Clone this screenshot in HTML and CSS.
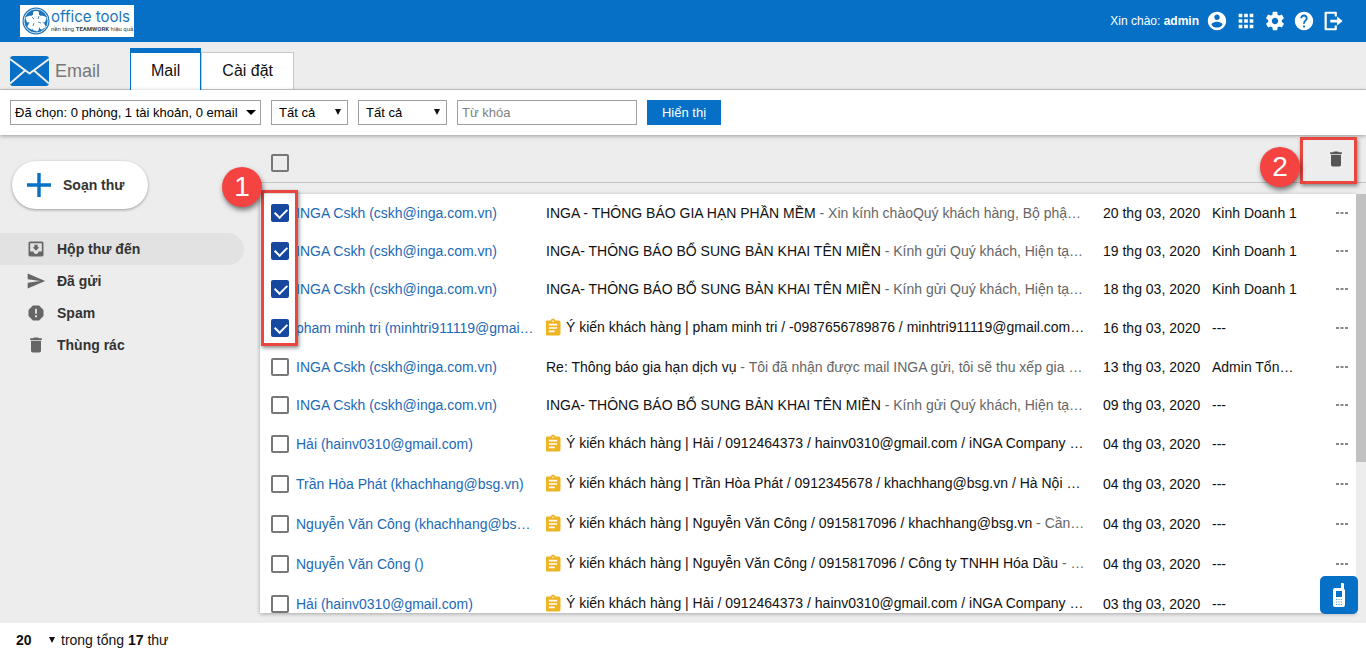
FILE: index.html
```html
<!DOCTYPE html>
<html lang="vi">
<head>
<meta charset="utf-8">
<title>Email</title>
<link rel="stylesheet" href="styles.css">
</head>
<body>
<svg class="sprite" aria-hidden="true">
  <symbol id="i-task" viewBox="0 0 24 24"><path d="M19 3h-4.200C14.400 1.800 13.300 1 12 1s-2.400.8-2.800 2H5c-1.100 0-2 .9-2 2v14c0 1.100.9 2 2 2h14c1.100 0 2-.9 2-2V5c0-1.100-.9-2-2-2zm-7 0c.55 0 1 .45 1 1s-.45 1-1 1-1-.45-1-1 .45-1 1-1zm2 14H7v-2h7v2zm3-4H7v-2h10v2zm0-4H7V7h10v2z"/></symbol>
  <symbol id="i-trash" viewBox="0 0 24 24"><path d="M6 19c0 1.100.9 2 2 2h8c1.100 0 2-.9 2-2V7H6v12zM19 4h-3.500l-1-1h-5l-1 1H5v2h14V4z"/></symbol>
  <symbol id="i-more" viewBox="0 0 12 4"><path d="M0 1h3v2H0zM4.500 1h3v2h-3zM9 1h3v2H9z"/></symbol>
</svg>
<header class="topbar">
  <a class="logo" href="#">
    <svg class="logo-mark" viewBox="0 0 28 28"><circle cx="14" cy="14" r="13.500" fill="#1b75bb"/><circle cx="14" cy="14" r="12" fill="none" stroke="#fff" stroke-width=".8"/><g fill="#fff"><circle cx="14" cy="14" r="7"/><rect x="11" y="4" width="6" height="6" rx="1.500"/><rect x="11" y="18" width="6" height="6" rx="1.500" transform="rotate(12 14 21)"/><rect x="4" y="9" width="6" height="6" rx="1.500" transform="rotate(-20 7 12)"/><rect x="18" y="9" width="6" height="6" rx="1.500" transform="rotate(20 21 12)"/><rect x="6" y="16" width="6" height="6" rx="1.500" transform="rotate(30 9 19)"/><rect x="17" y="16" width="6" height="6" rx="1.500" transform="rotate(-30 20 19)"/></g><path d="M10 10l2 2m5-3l-1 3m3 4l-3-1m-5 4l1-3" fill="none" stroke="#1b75bb" stroke-width=".8"/></svg>
    <span class="logo-text"><span class="logo-name">office tools</span><span class="logo-tag">nền tảng <b>TEAMWORK</b> hiệu quả</span></span>
  </a>
  <div class="account">
    <span class="hello">Xin chào: <b>admin</b></span>
    <a href="#" aria-label="Tài khoản"><svg viewBox="0 0 24 24"><path d="M12 2C6.480 2 2 6.480 2 12s4.480 10 10 10 10-4.480 10-10S17.520 2 12 2zm0 3c1.660 0 3 1.340 3 3s-1.340 3-3 3-3-1.340-3-3 1.340-3 3-3zm0 14.200c-2.500 0-4.710-1.280-6-3.220.03-1.990 4-3.080 6-3.080 1.990 0 5.970 1.090 6 3.080-1.290 1.940-3.500 3.220-6 3.220z"/></svg></a>
    <a href="#" aria-label="Ứng dụng"><svg viewBox="0 0 24 24"><path d="M4 8h4V4H4v4zm6 12h4v-4h-4v4zm-6 0h4v-4H4v4zm0-6h4v-4H4v4zm6 0h4v-4h-4v4zm6-10v4h4V4h-4zm-6 4h4V4h-4v4zm6 6h4v-4h-4v4zm0 6h4v-4h-4v4z"/></svg></a>
    <a href="#" aria-label="Cài đặt"><svg viewBox="0 0 24 24"><path d="M19.430 12.980c.04-.32.07-.64.07-.98s-.03-.66-.07-.98l2.110-1.650c.19-.15.24-.42.12-.64l-2-3.460c-.12-.22-.39-.3-.61-.22l-2.490 1c-.52-.4-1.080-.73-1.690-.98l-.38-2.650C14.460 2.180 14.250 2 14 2h-4c-.25 0-.46.18-.49.42l-.38 2.650c-.61.25-1.170.59-1.690.98l-2.490-1c-.23-.09-.49 0-.61.22l-2 3.460c-.13.22-.07.49.12.64l2.110 1.650c-.04.32-.07.65-.07.98s.03.66.07.98l-2.110 1.650c-.19.15-.24.42-.12.64l2 3.460c.12.22.39.3.61.22l2.490-1c.52.4 1.080.73 1.690.98l.38 2.650c.03.24.24.42.49.42h4c.25 0 .46-.18.49-.42l.38-2.650c.61-.25 1.170-.59 1.690-.98l2.490 1c.23.09.49 0 .61-.22l2-3.460c.12-.22.07-.49-.12-.64l-2.110-1.650zM12 15.500c-1.930 0-3.500-1.570-3.500-3.500s1.570-3.500 3.500-3.500 3.500 1.570 3.500 3.500-1.570 3.500-3.500 3.500z"/></svg></a>
    <a href="#" aria-label="Trợ giúp"><svg viewBox="0 0 24 24"><path d="M12 2C6.480 2 2 6.480 2 12s4.480 10 10 10 10-4.480 10-10S17.520 2 12 2zm1 17h-2v-2h2v2zm2.070-7.750l-.9.920C13.450 12.900 13 13.500 13 15h-2v-.5c0-1.100.45-2.100 1.170-2.830l1.240-1.260c.37-.36.59-.86.59-1.410 0-1.100-.9-2-2-2s-2 .9-2 2H8c0-2.210 1.790-4 4-4s4 1.790 4 4c0 .88-.36 1.680-.93 2.250z"/></svg></a>
    <a href="#" aria-label="Đăng xuất"><svg viewBox="0 0 24 24"><path d="M15 7V3H4v18h11v-4" fill="none" stroke="#fff" stroke-width="2.400" stroke-linejoin="round"/><path d="M9 10.500h7.500V7l6 5-6 5v-3.500H9z"/></svg></a>
  </div>
</header>
<nav class="tabs">
  <div class="module">
    <svg viewBox="0 0 39 30"><rect width="39" height="30" rx="3" fill="#0570c6"/><path d="M0 3l19.500 14.500L39 3M0 27.500l15-13M39 27.500l-15-13" fill="none" stroke="#eee" stroke-width="2"/></svg>
    <span>Email</span>
  </div>
  <a class="tab tab-active" href="#">Mail</a>
  <a class="tab" href="#">Cài đặt</a>
</nav>
<form class="filters">
  <button type="button" class="account-picker">Đã chọn: 0 phòng, 1 tài khoản, 0 email<svg viewBox="0 0 10 5"><path d="M0 0h10L5 5z"/></svg></button>
  <span class="pick"><select aria-label="Trạng thái"><option>Tất cả</option></select></span>
  <span class="pick pick-wide"><select aria-label="Loại thư"><option>Tất cả</option></select></span>
  <input class="keyword" type="text" placeholder="Từ khóa" aria-label="Từ khóa">
  <button type="button" class="show">Hiển thị</button>
</form>
<main class="main">
  <aside class="sidebar">
    <button type="button" class="compose"><svg viewBox="0 0 24 24"><path d="M12 0v24M0 12h24" stroke="#0570c6" stroke-width="3.400"/></svg>Soạn thư</button>
    <nav class="folders">
      <a class="folder folder-active" href="#"><svg viewBox="0 0 24 24"><path d="M19 3H5c-1.100 0-2 .9-2 2v14c0 1.100.9 2 2 2h14c1.100 0 2-.9 2-2V5c0-1.100-.9-2-2-2zm0 12h-4c0 1.660-1.350 3-3 3s-3-1.340-3-3H5V5h14v10zm-3-5h-2V7h-4v3H8l4 4 4-4z"/></svg>Hộp thư đến</a>
      <a class="folder" href="#"><svg viewBox="0 0 24 24"><path d="M2 21l21-9L2 3v7l15 2-15 2z"/></svg>Đã gửi</a>
      <a class="folder" href="#"><svg viewBox="0 0 24 24"><path d="M15.730 3H8.270L3 8.270v7.460L8.270 21h7.460L21 15.730V8.270L15.730 3zM12 17.300c-.72 0-1.300-.58-1.300-1.300s.58-1.300 1.300-1.300 1.300.58 1.300 1.300-.58 1.300-1.300 1.300zm1-4.300h-2V7h2v6z"/></svg>Spam</a>
      <a class="folder" href="#"><svg viewBox="0 0 24 24"><use href="#i-trash"/></svg>Thùng rác</a>
    </nav>
  </aside>
  <section class="mailbox">
    <div class="toolbar">
      <input type="checkbox" class="check" aria-label="Chọn tất cả">
      <button type="button" class="delete" aria-label="Xóa"><svg><use href="#i-trash"/></svg></button>
      <div class="frame frame-delete"><span class="step">2</span></div>
    </div>
    <div class="list-area">
      <div class="list">
        <table class="mails">
          <colgroup><col class="c-check"><col class="c-from"><col class="c-subject"><col class="c-date"><col class="c-dept"><col class="c-more"></colgroup>
          <tbody>
            <tr><td><input type="checkbox" class="check" aria-label="Chọn thư" checked></td><td><a href="#">INGA Cskh (cskh@inga.com.vn)</a></td><td>INGA - THÔNG BÁO GIA HẠN PHẦN MỀM <span class="preview">- Xin kính chàoQuý khách hàng, Bộ phậ…</span></td><td>20 thg 03, 2020</td><td>Kinh Doanh 1</td><td><button type="button" class="more" aria-label="Thêm"><svg><use href="#i-more"/></svg></button></td></tr>
            <tr><td><input type="checkbox" class="check" aria-label="Chọn thư" checked></td><td><a href="#">INGA Cskh (cskh@inga.com.vn)</a></td><td>INGA- THÔNG BÁO BỔ SUNG BẢN KHAI TÊN MIỀN <span class="preview">- Kính gửi Quý khách, Hiện tạ…</span></td><td>19 thg 03, 2020</td><td>Kinh Doanh 1</td><td><button type="button" class="more" aria-label="Thêm"><svg><use href="#i-more"/></svg></button></td></tr>
            <tr><td><input type="checkbox" class="check" aria-label="Chọn thư" checked></td><td><a href="#">INGA Cskh (cskh@inga.com.vn)</a></td><td>INGA- THÔNG BÁO BỔ SUNG BẢN KHAI TÊN MIỀN <span class="preview">- Kính gửi Quý khách, Hiện tạ…</span></td><td>18 thg 03, 2020</td><td>Kinh Doanh 1</td><td><button type="button" class="more" aria-label="Thêm"><svg><use href="#i-more"/></svg></button></td></tr>
            <tr class="with-task"><td><input type="checkbox" class="check" aria-label="Chọn thư" checked></td><td><a href="#">pham minh tri (minhtri911119@gmai…</a></td><td><svg class="task"><use href="#i-task"/></svg>Ý kiến khách hàng | pham minh tri / -0987656789876 / minhtri911119@gmail.com…</td><td>16 thg 03, 2020</td><td>---</td><td><button type="button" class="more" aria-label="Thêm"><svg><use href="#i-more"/></svg></button></td></tr>
            <tr><td><input type="checkbox" class="check" aria-label="Chọn thư"></td><td><a href="#">INGA Cskh (cskh@inga.com.vn)</a></td><td>Re: Thông báo gia hạn dịch vụ <span class="preview">- Tôi đã nhận được mail INGA gửi, tôi sẽ thu xếp gia …</span></td><td>13 thg 03, 2020</td><td>Admin Tổn…</td><td><button type="button" class="more" aria-label="Thêm"><svg><use href="#i-more"/></svg></button></td></tr>
            <tr><td><input type="checkbox" class="check" aria-label="Chọn thư"></td><td><a href="#">INGA Cskh (cskh@inga.com.vn)</a></td><td>INGA- THÔNG BÁO BỔ SUNG BẢN KHAI TÊN MIỀN <span class="preview">- Kính gửi Quý khách, Hiện tạ…</span></td><td>09 thg 03, 2020</td><td>---</td><td><button type="button" class="more" aria-label="Thêm"><svg><use href="#i-more"/></svg></button></td></tr>
            <tr class="with-task"><td><input type="checkbox" class="check" aria-label="Chọn thư"></td><td><a href="#">Hải (hainv0310@gmail.com)</a></td><td><svg class="task"><use href="#i-task"/></svg>Ý kiến khách hàng | Hải / 0912464373 / hainv0310@gmail.com / iNGA Company …</td><td>04 thg 03, 2020</td><td>---</td><td><button type="button" class="more" aria-label="Thêm"><svg><use href="#i-more"/></svg></button></td></tr>
            <tr class="with-task"><td><input type="checkbox" class="check" aria-label="Chọn thư"></td><td><a href="#">Trần Hòa Phát (khachhang@bsg.vn)</a></td><td><svg class="task"><use href="#i-task"/></svg>Ý kiến khách hàng | Trần Hòa Phát / 0912345678 / khachhang@bsg.vn / Hà Nội …</td><td>04 thg 03, 2020</td><td>---</td><td><button type="button" class="more" aria-label="Thêm"><svg><use href="#i-more"/></svg></button></td></tr>
            <tr class="with-task"><td><input type="checkbox" class="check" aria-label="Chọn thư"></td><td><a href="#">Nguyễn Văn Công (khachhang@bs…</a></td><td><svg class="task"><use href="#i-task"/></svg>Ý kiến khách hàng | Nguyễn Văn Công / 0915817096 / khachhang@bsg.vn <span class="preview">- Cần…</span></td><td>04 thg 03, 2020</td><td>---</td><td><button type="button" class="more" aria-label="Thêm"><svg><use href="#i-more"/></svg></button></td></tr>
            <tr class="with-task"><td><input type="checkbox" class="check" aria-label="Chọn thư"></td><td><a href="#">Nguyễn Văn Công ()</a></td><td><svg class="task"><use href="#i-task"/></svg>Ý kiến khách hàng | Nguyễn Văn Công / 0915817096 / Công ty TNHH Hóa Dầu <span class="preview">- …</span></td><td>04 thg 03, 2020</td><td>---</td><td><button type="button" class="more" aria-label="Thêm"><svg><use href="#i-more"/></svg></button></td></tr>
            <tr class="with-task"><td><input type="checkbox" class="check" aria-label="Chọn thư"></td><td><a href="#">Hải (hainv0310@gmail.com)</a></td><td><svg class="task"><use href="#i-task"/></svg>Ý kiến khách hàng | Hải / 0912464373 / hainv0310@gmail.com / iNGA Company …</td><td>03 thg 03, 2020</td><td>---</td><td></td></tr>
          </tbody>
        </table>
      </div>
      <div class="scroll"><div class="scroll-thumb"></div></div>
      <div class="frame frame-checks"><span class="step">1</span></div>
      <button type="button" class="phone" aria-label="Gọi điện"><svg viewBox="0 0 12 24"><path d="M8 0h2a1 1 0 0 1 1 1v5a2 2 0 0 1 1 2v14a2 2 0 0 1-2 2H2a2 2 0 0 1-2-2V7a2 2 0 0 1 2-2h6z" fill="#fff"/><path d="M3 8h6v6H3z" fill="#0570c6"/><path d="M3 16.500h6M3 19h6M3 21.500h6" stroke="#5aa0da" stroke-dasharray="1.200 1.200"/></svg></button>
    </div>
  </section>
</main>
<footer class="footer">
  <span class="page-size"><select aria-label="Số thư mỗi trang"><option>20</option></select></span>
  <span>trong tổng <b>17</b> thư</span>
</footer>
</body>
</html>
```
FILE: styles.css
```css
* { box-sizing: border-box; }
body {
  margin: 0;
  height: 100vh;
  display: flex;
  flex-direction: column;
  font: 14px/18px "Liberation Sans", Arial, sans-serif;
  color: #111;
  background: #ededed;
  overflow: hidden;
}
a { color: inherit; text-decoration: none; }
button, select, input { font: inherit; margin: 0; }
button { border: 0; padding: 0; background: none; color: inherit; cursor: pointer; }
.sprite { display: none; }

.topbar {
  flex: none;
  display: flex;
  align-items: center;
  justify-content: space-between;
  height: 42px;
  padding: 0 22px 0 20px;
  background: #0570c6;
  color: #fff;
}
.logo { display: flex; align-items: center; gap: 1px; height: 32px; width: 114px; padding-left: 2px; background: #fff; white-space: nowrap; }
.logo-mark { flex: none; width: 28px; height: 28px; }
.logo-text { display: flex; flex-direction: column; }
.logo-name { font: 15px/16px Inter, sans-serif; color: #1b75bb; }
.logo-tag { font: 6px/8px Roboto, sans-serif; color: #444; }
.account { display: flex; align-items: center; gap: 7px; }
.account a { display: flex; }
.account svg { width: 22px; height: 22px; fill: #fff; }
.hello { font-size: 12px; }

.tabs {
  flex: none;
  display: flex;
  align-items: flex-end;
  height: 48px;
  padding-left: 10px;
  border-bottom: 1px solid #c8c8c8;
}
.module { display: flex; align-items: center; gap: 6px; width: 120px; height: 36px; font-size: 18px; color: #777; }
.module svg { width: 39px; height: 30px; }
.tab {
  display: flex;
  align-items: center;
  height: 37px;
  padding: 0 20px;
  font-size: 16px;
  background: #fff;
  border: 1px solid #c8c8c8;
  border-width: 1px 1px 0 1px;
}
.tab-active { height: 42px; margin-bottom: -1px; padding-bottom: 2px; border: solid #0570c6; border-width: 5px 1px 0 1px; }

.filters {
  position: relative;
  flex: none;
  display: flex;
  gap: 10px;
  padding: 10px 10px;
  background: #fff;
  box-shadow: 0 1px 4px rgba(0, 0, 0, .35);
  font-size: 13px;
}
.account-picker, .pick select, .keyword { height: 25px; border: 1px solid #a0a0a0; background: #fff; color: #000; border-radius: 0; }
.account-picker { display: flex; align-items: center; justify-content: space-between; width: 251px; padding: 0 4px; white-space: nowrap; }
.account-picker svg { width: 10px; height: 5px; }
.pick, .page-size { position: relative; display: flex; }
.pick select { width: 77px; padding: 0 7px; appearance: none; }
.pick-wide select { width: 89px; }
.pick::after, .page-size::after {
  content: "";
  position: absolute;
  right: 7px;
  top: 9px;
  border: solid transparent;
  border-width: 6px 3px 0;
  border-top-color: #111;
  pointer-events: none;
}
.keyword { width: 180px; padding: 0 4px; }
.keyword::placeholder { color: #808080; }
.show { width: 74px; height: 25px; background: #0570c6; color: #fff; }

.main { flex: 1; min-height: 0; display: flex; }
.sidebar { flex: none; width: 260px; padding-top: 26px; }
.compose {
  display: flex;
  align-items: center;
  gap: 12px;
  width: 136px;
  height: 48px;
  margin-left: 12px;
  padding-left: 15px;
  border-radius: 24px;
  background: #fff;
  box-shadow: 0 1px 3px rgba(0, 0, 0, .35);
  font-weight: bold;
  color: #333;
}
.compose svg { width: 24px; height: 24px; }
.folders { padding-top: 24px; }
.folder { display: flex; align-items: center; gap: 11px; width: 244px; height: 32px; padding-left: 26px; font-weight: bold; color: #333; }
.folder svg { width: 20px; height: 20px; fill: #666; }
.folder-active { background: #e2e2e2; border-radius: 0 16px 16px 0; }

.mailbox { flex: 1; min-width: 0; display: flex; flex-direction: column; gap: 11px; padding-bottom: 10px; }
.toolbar {
  position: relative;
  flex: none;
  display: flex;
  align-items: center;
  justify-content: space-between;
  height: 48px;
  padding: 8px 20px 0 11px;
  border-bottom: 1px solid #c4c4c4;
}
.delete svg { display: block; width: 20px; height: 20px; fill: #555; margin-bottom: 7px; }
.check {
  appearance: none;
  display: block;
  width: 18px;
  height: 18px;
  border: 2px solid #777;
  border-radius: 2px;
}
.check:checked { border-color: #17489f; background: #17489f; }
.check:checked::after {
  content: "";
  display: block;
  width: 6px;
  height: 10px;
  margin: 0 0 0 4px;
  border: solid #fff;
  border-width: 0 2px 2px 0;
  transform: rotate(45deg);
}

.list-area { position: relative; flex: 1; min-height: 0; display: flex; }
.list { flex: 1; min-width: 0; overflow: hidden; background: #fff; box-shadow: 0 1px 4px rgba(0, 0, 0, .3); }
.mails { width: 100%; table-layout: fixed; border-collapse: collapse; }
.c-check { width: 36px; }
.c-from { width: 250px; }
.c-date { width: 109px; }
.c-dept { width: 110px; }
.c-more { width: 34px; }
.mails tr { height: 38px; }
.mails .with-task { height: 40px; }
.mails td { padding: 0; vertical-align: middle; overflow: hidden; white-space: nowrap; text-overflow: ellipsis; }
.mails td:nth-child(1) { padding-left: 11px; }
.mails td:nth-child(2) { padding-right: 10px; color: #1b69b6; }
.mails td:nth-child(3) { padding-right: 16px; }
.mails td:nth-child(5) { padding-right: 20px; }
.mails td:nth-child(6) { padding-left: 14px; }
.preview { color: #666; }
.task { width: 20px; height: 20px; margin: 0 3px 0 -3px; vertical-align: -6px; fill: #eeb422; }
.more, .more svg { display: block; width: 12px; height: 4px; fill: #888; }
.scroll { flex: none; width: 10px; background: #ededed; }
.scroll-thumb { height: 64%; background: #c1c1c1; }

.frame { position: absolute; border: 3px solid #e8463f; box-shadow: 1px 2px 4px rgba(0, 0, 0, .45); pointer-events: none; }
.frame-checks { left: 1px; top: -4px; width: 37px; height: 156px; }
.frame-delete { right: 9px; top: 2px; width: 57px; height: 47px; }
.step {
  position: absolute;
  left: -43px;
  top: 7px;
  width: 40px;
  height: 40px;
  border-radius: 50%;
  background: #f44340;
  box-shadow: 1px 3px 5px rgba(0, 0, 0, .5);
  color: #fff;
  font-size: 28px;
  line-height: 40px;
  text-align: center;
}
.frame-checks .step { top: -26px; left: -42px; }
.phone { position: absolute; right: 8px; bottom: -1px; display: flex; align-items: center; justify-content: center; width: 38px; height: 38px; border-radius: 5px; background: #0570c6; }
.phone svg { width: 12px; height: 24px; }

.footer { flex: none; display: flex; align-items: center; height: 34px; padding-left: 16px; background: #fff; }
.page-size select { appearance: none; width: 45px; padding: 0; border: 0; background: none; font-weight: bold; color: #111; }
.page-size::after { right: 6px; top: 6px; }
```
